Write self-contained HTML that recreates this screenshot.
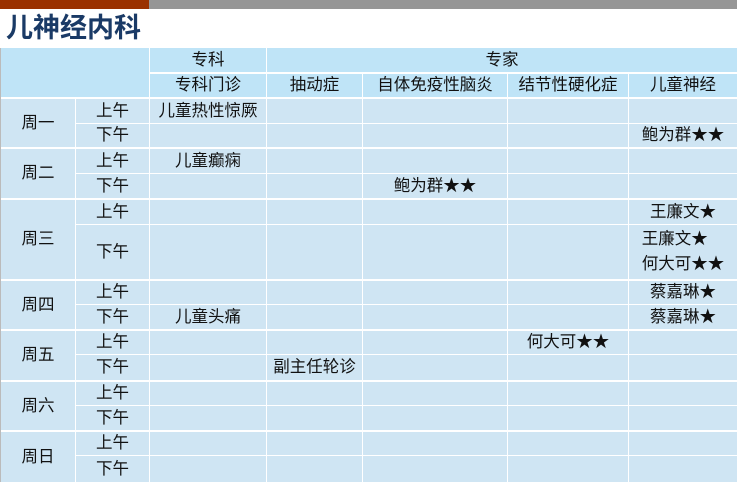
<!DOCTYPE html>
<html><head><meta charset="utf-8"><style>
body{margin:0;width:737px;height:482px;background:#fff;position:relative;overflow:hidden;font-family:"Liberation Sans","Noto Sans CJK SC",sans-serif;}
.c{position:absolute;display:flex;align-items:center;justify-content:center;background:#cfe5f3;font-size:16.5px;color:#111;white-space:nowrap;flex-direction:column;line-height:25px}
.h{background:#bfe4f7}
</style></head><body>
<div style="position:absolute;left:0;top:0;width:149px;height:9px;background:#9a3100"></div>
<div style="position:absolute;left:149px;top:0;width:588px;height:9px;background:#969696"></div>
<div style="position:absolute;left:6px;top:10px;font-size:27px;line-height:36px;font-weight:bold;color:#1a3a66">儿神经内科</div>
<div style="position:absolute;left:0;top:48px;width:1px;height:434px;background:#bbb"></div>

<div class="c h" style="left:1px;top:48px;width:148px;height:49px"></div>
<div class="c h" style="left:150px;top:48px;width:116px;height:24px">专科</div>
<div class="c h" style="left:267px;top:48px;width:470px;height:24px">专家</div>
<div class="c h" style="left:150px;top:74px;width:116px;height:23px">专科门诊</div>
<div class="c h" style="left:267px;top:74px;width:95px;height:23px">抽动症</div>
<div class="c h" style="left:363px;top:74px;width:144px;height:23px">自体免疫性脑炎</div>
<div class="c h" style="left:508px;top:74px;width:120px;height:23px">结节性硬化症</div>
<div class="c h" style="left:629px;top:74px;width:108px;height:23px">儿童神经</div>

<div class="c" style="left:1px;top:99px;width:74px;height:48px">周一</div>
<div class="c" style="left:1px;top:149px;width:74px;height:49px">周二</div>
<div class="c" style="left:1px;top:200px;width:74px;height:79px">周三</div>
<div class="c" style="left:1px;top:281px;width:74px;height:48px">周四</div>
<div class="c" style="left:1px;top:331px;width:74px;height:49px">周五</div>
<div class="c" style="left:1px;top:382px;width:74px;height:48px">周六</div>
<div class="c" style="left:1px;top:432px;width:74px;height:50px">周日</div>

<div id="rows"></div>
<script>
var X=[76,150,267,363,508,629,737];
var R=[[99,24,'上午',['儿童热性惊厥','','','','']],
[124,23,'下午',['','','','','鲍为群★★']],
[149,24,'上午',['儿童癫痫','','','','']],
[174,24,'下午',['','','鲍为群★★','','']],
[200,24,'上午',['','','','','王廉文★']],
[225,54,'下午',['','','','','王廉文★<br>何大可★★']],
[281,23,'上午',['','','','','蔡嘉琳★']],
[305,24,'下午',['儿童头痛','','','','蔡嘉琳★']],
[331,23,'上午',['','','','何大可★★','']],
[355,25,'下午',['','副主任轮诊','','','']],
[382,23,'上午',['','','','','']],
[406,24,'下午',['','','','','']],
[432,23,'上午',['','','','','']],
[456,26,'下午',['','','','','']]];
var h='';
R.forEach(function(r){
 for(var i=0;i<6;i++){
  var w=X[i+1]-X[i]-1; if(i==5)w=X[6]-X[5];
  var t=i==0?r[2]:r[3][i-1];
  h+='<div class="c" style="left:'+X[i]+'px;top:'+r[0]+'px;width:'+w+'px;height:'+r[1]+'px">'+t+'</div>';
 }
});
document.getElementById('rows').outerHTML=h;
</script>
</body></html>
